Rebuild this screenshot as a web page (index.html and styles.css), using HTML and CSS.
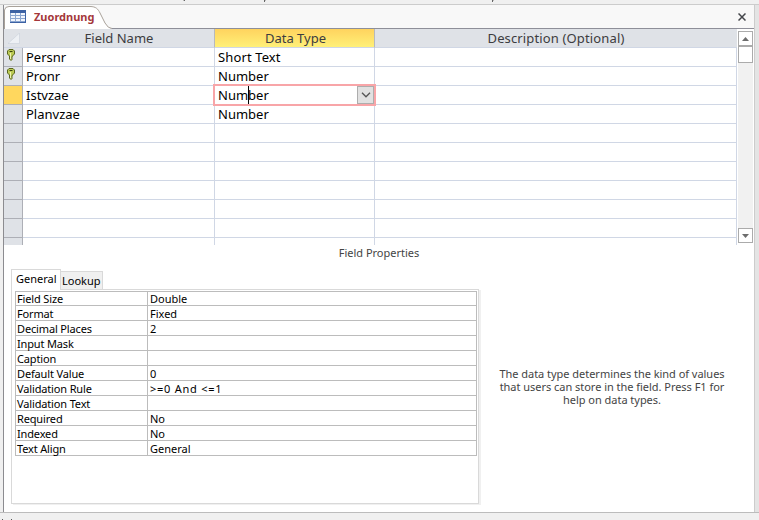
FILE: index.html
```html
<!DOCTYPE html>
<html lang="en">
<head>
<meta charset="utf-8">
<title>Zuordnung</title>
<link rel="stylesheet" href="styles.css">
</head>
<body>
<div class="app">
  <div class="ribbon-edge">
    <svg width="759" height="4" viewBox="0 0 759 4"><path d="M184.500 0v1M264.500 0v2M492.500 0v2" stroke="#666" fill="none"/><path d="M183 .5h1M265 .5h1M493 .5h1" stroke="#bbb"/></svg>
  </div>
  <div class="workspace">
    <main class="document">
      <header class="tabbar">
        <svg class="tab-shape" width="120" height="24" viewBox="0 0 120 24"><path d="M.5 24V5Q1 1.500 5 1.500H86C92 1.500 94 4 96 8L101 18Q104 23.500 108 23.500V24Z" fill="#fff"/><path d="M.5 24V5Q1 1.500 5 1.500H86C92 1.500 94 4 96 8L101 18Q104 23.500 108 23.500" fill="none" stroke="#a9a29a"/></svg>
        <div class="tab">
          <svg width="16" height="13" viewBox="0 0 16 13"><path d="M0 0h16v13H0z" fill="#8aa5d0"/><path d="M0 0h16v3H0zM15 0h1v13h-1zM0 12h16v1H0z" fill="#3c62a4"/><path d="M1 3h4v2H1zm5 0h4v2H6zm5 0h4v2h-4zM1 6h4v2H1zm5 0h4v2H6zm5 0h4v2h-4zM1 9h4v2H1zm5 0h4v2H6zm5 0h4v2h-4z" fill="#f1f5fc"/></svg>
          <span class="tab-title">Zuordnung</span>
        </div>
        <svg class="close" width="8" height="8" viewBox="0 0 8 8"><path d="M.5.5l7 7M7.500.5l-7 7" stroke="#44464a" stroke-width="1.500"/></svg>
      </header>
      <section class="design">
        <div class="grid">
          <div class="row head"><span class="sel"><svg width="12" height="11" viewBox="0 0 12 11"><path d="M11.500 0v10.500H0z" fill="#edf0f4" stroke="#c9d0da" stroke-width=".6"/></svg></span><span>Field Name</span><span class="active">Data Type</span><span class="desc">Description (Optional)</span></div>
          <div class="row"><span class="sel"><svg class="key" width="8" height="12" viewBox="0 0 8 12"><path d="M2 .5h4L7.500 2v3L5.500 7v.5l-1 .7 1 .8-1 .8.500.7L4 11.500 2.500 10V7L.5 5V2z" fill="#bccb55" stroke="#59651f"/><path d="M2.500 2.500h3" stroke="#38420f"/><path d="M3.500 4v6" stroke="#edf2ae"/></svg></span><span>Persnr</span><span class="short">Short Text</span><span></span></div>
          <div class="row"><span class="sel"><svg class="key" width="8" height="12" viewBox="0 0 8 12"><path d="M2 .5h4L7.500 2v3L5.500 7v.5l-1 .7 1 .8-1 .8.500.7L4 11.500 2.500 10V7L.5 5V2z" fill="#bccb55" stroke="#59651f"/><path d="M2.500 2.500h3" stroke="#38420f"/><path d="M3.500 4v6" stroke="#edf2ae"/></svg></span><span>Pronr</span><span>Number</span><span></span></div>
          <div class="row"><span class="sel current"></span><span>Istvzae</span><span class="editing">Number<i class="focus"><i class="caret"></i><i class="drop"><svg width="10" height="6" viewBox="0 0 10 6"><path d="M1 .8l4 4 4-4" fill="none" stroke="#555" stroke-width="1.300"/></svg></i></i></span><span></span></div>
          <div class="row"><span class="sel"></span><span>Planvzae</span><span>Number</span><span></span></div>
          <div class="row"><span class="sel"></span><span></span><span></span><span></span></div>
          <div class="row"><span class="sel"></span><span></span><span></span><span></span></div>
          <div class="row"><span class="sel"></span><span></span><span></span><span></span></div>
          <div class="row"><span class="sel"></span><span></span><span></span><span></span></div>
          <div class="row"><span class="sel"></span><span></span><span></span><span></span></div>
          <div class="row"><span class="sel"></span><span></span><span></span><span></span></div>
          <div class="row"><span class="sel"></span><span></span><span></span><span></span></div>
        </div>
        <div class="scrollbar">
          <div class="arrow"><svg width="7" height="4" viewBox="0 0 7 4"><path d="M0 4L3.500 0 7 4z" fill="#6d6d6d"/></svg></div>
          <div class="thumb"></div>
          <div class="arrow down"><svg width="7" height="4" viewBox="0 0 7 4"><path d="M0 0h7L3.500 4z" fill="#6d6d6d"/></svg></div>
        </div>
      </section>
      <h2 class="caption">Field Properties</h2>
      <section class="lower">
        <div class="props">
          <div class="ptabs"><span class="ptab on">General</span><span class="ptab">Lookup</span></div>
          <div class="panel">
            <dl class="plist">
              <dt class="first">Field Size</dt><dd class="first">Double</dd>
              <dt>Format</dt><dd>Fixed</dd>
              <dt>Decimal Places</dt><dd>2</dd>
              <dt>Input Mask</dt><dd></dd>
              <dt>Caption</dt><dd></dd>
              <dt>Default Value</dt><dd>0</dd>
              <dt>Validation Rule</dt><dd class="rule">&gt;=0 And &lt;=1</dd>
              <dt>Validation Text</dt><dd></dd>
              <dt>Required</dt><dd>No</dd>
              <dt>Indexed</dt><dd>No</dd>
              <dt>Text Align</dt><dd>General</dd>
            </dl>
          </div>
        </div>
        <p class="hint">The data type determines the kind of values<br>that users can store in the field. Press F1 for<br>help on data types.</p>
      </section>
    </main>
  </div>
  <footer class="status"><svg width="20" height="8" viewBox="0 0 20 8"><path d="M2 6.500h1M11 6.500h1" stroke="#555"/></svg></footer>
</div>
</body>
</html>
```
FILE: styles.css
```css
* { box-sizing: border-box; }
body { margin: 0; font-family: "Noto Sans", sans-serif; color: #000; background: #f0f0f0; }
svg { display: block; flex: none; }
.app { width: 759px; height: 520px; display: flex; flex-direction: column; overflow: hidden; }
.ribbon-edge { height: 5px; border-bottom: 1px solid #ccc; background: #f0f0f0; }
.workspace { height: 508px; padding: 0 4px 0 3px; border-bottom: 1px solid #bcbcbc; background: linear-gradient(to right, #f0f0f0 50%, #e4e4e4 50%); }
.document { height: 507px; background: #fff; border-left: 1px solid #8c8c90; border-right: 1px solid #ccc; }
.tabbar { height: 24px; position: relative; display: flex; justify-content: space-between; align-items: center; background: #f8f8f8; border-bottom: 1px solid #8e8f99; padding: 0 8px 0 6px; }
.tab-shape { position: absolute; left: 0; top: 0; }
.tab { position: relative; display: flex; align-items: center; gap: 8px; }
.tab-title { font-size: 11px; font-weight: 700; color: #a4373a; line-height: 16px; }
.design { height: 216px; display: flex; }
.grid { width: 733px; overflow: hidden; }
.row { height: 19px; display: grid; grid-template-columns: 19px 192px 160px 362px; font-size: 13px; line-height: 18px; white-space: nowrap; }
.row > span { border-right: 1px solid #d0d7e5; border-bottom: 1px solid #d0d7e5; padding-left: 3px; }
.row > .sel { background: #dfe2e7; border-color: #adafb6; padding: 1px 0 0 3px; }
.row > .current { background: #ffd75e; }
.row > .short { letter-spacing: .12px; }
.head > span, .head > .sel { background: #dfe2e7; color: #3c3c40; text-align: center; padding-left: 0; border-right: 0; }
.head > .sel { padding: 4px 0 0 4px; border-color: #d0d7e5; }
.head > .active { background: linear-gradient(#ffd35e, #fff078); border-right: 1px solid #b7b9bd; border-left: 1px solid #b7b9bd; margin-left: -1px; padding-left: 2px; }
.head > .desc { letter-spacing: .14px; }
.editing { position: relative; }
.focus { position: absolute; left: -2px; top: -2px; width: 163px; height: 22px; border: 2px solid #f8a5a8; }
.caret { position: absolute; left: 33px; top: 0; width: 1px; height: 18px; background: #000; }
.drop { position: absolute; right: 0; top: 0; width: 17px; height: 18px; border: 1px solid #adadad; background: #e1e1e1; display: flex; align-items: center; justify-content: center; }
.scrollbar { width: 15px; height: 212px; margin: 2px 0 0 1px; background: #f1f1f1; display: flex; flex-direction: column; }
.arrow { height: 15px; border: 1px solid #ababab; background: #fff; display: flex; align-items: center; justify-content: center; }
.thumb { height: 17px; border: 1px solid #ababab; background: #fff; }
.down { margin-top: auto; }
.caption { margin: 0; height: 16px; font-size: 11px; font-weight: 400; line-height: 15px; color: #444; text-align: center; }
.lower { display: flex; height: 250px; padding: 7px 0 0 7px; }
.props { width: 470px; font-size: 11px; }
.ptabs { display: flex; align-items: flex-end; height: 21px; }
.ptab { height: 18px; line-height: 18px; padding-left: 1px; width: 42px; background: #f0f0f0; border: 1px solid #d9d9d9; border-left: 0; border-bottom: 0; white-space: nowrap; }
.ptab.on { height: 21px; line-height: 18px; width: 50px; padding-left: 4px; background: #fff; border-left: 1px solid #d9d9d9; position: relative; top: 1px; }
.panel { width: 468px; height: 215px; border: 1px solid #d9d9d9; box-shadow: 2px 1px #f0f0f0; padding: 1px 0 0 3px; }
.plist { margin: 0; width: 462px; display: grid; grid-template-columns: 132px 329px; grid-template-rows: 14px repeat(10, 15px); border-top: 1px solid #bcbcbc; border-left: 1px solid #bcbcbc; line-height: 16px; }
dt, dd { margin: 0; padding-left: 1px; border-right: 1px solid #bcbcbc; border-bottom: 1px solid #bcbcbc; white-space: nowrap; }
dt { letter-spacing: -.15px; }
dd { padding-left: 2px; }
.first { line-height: 14px; }
.rule { letter-spacing: .75px; }
.hint { margin: 99px 0 0 8px; width: 246px; font-size: 11px; line-height: 13px; letter-spacing: -.03px; color: #444; text-align: center; white-space: nowrap; }
```
